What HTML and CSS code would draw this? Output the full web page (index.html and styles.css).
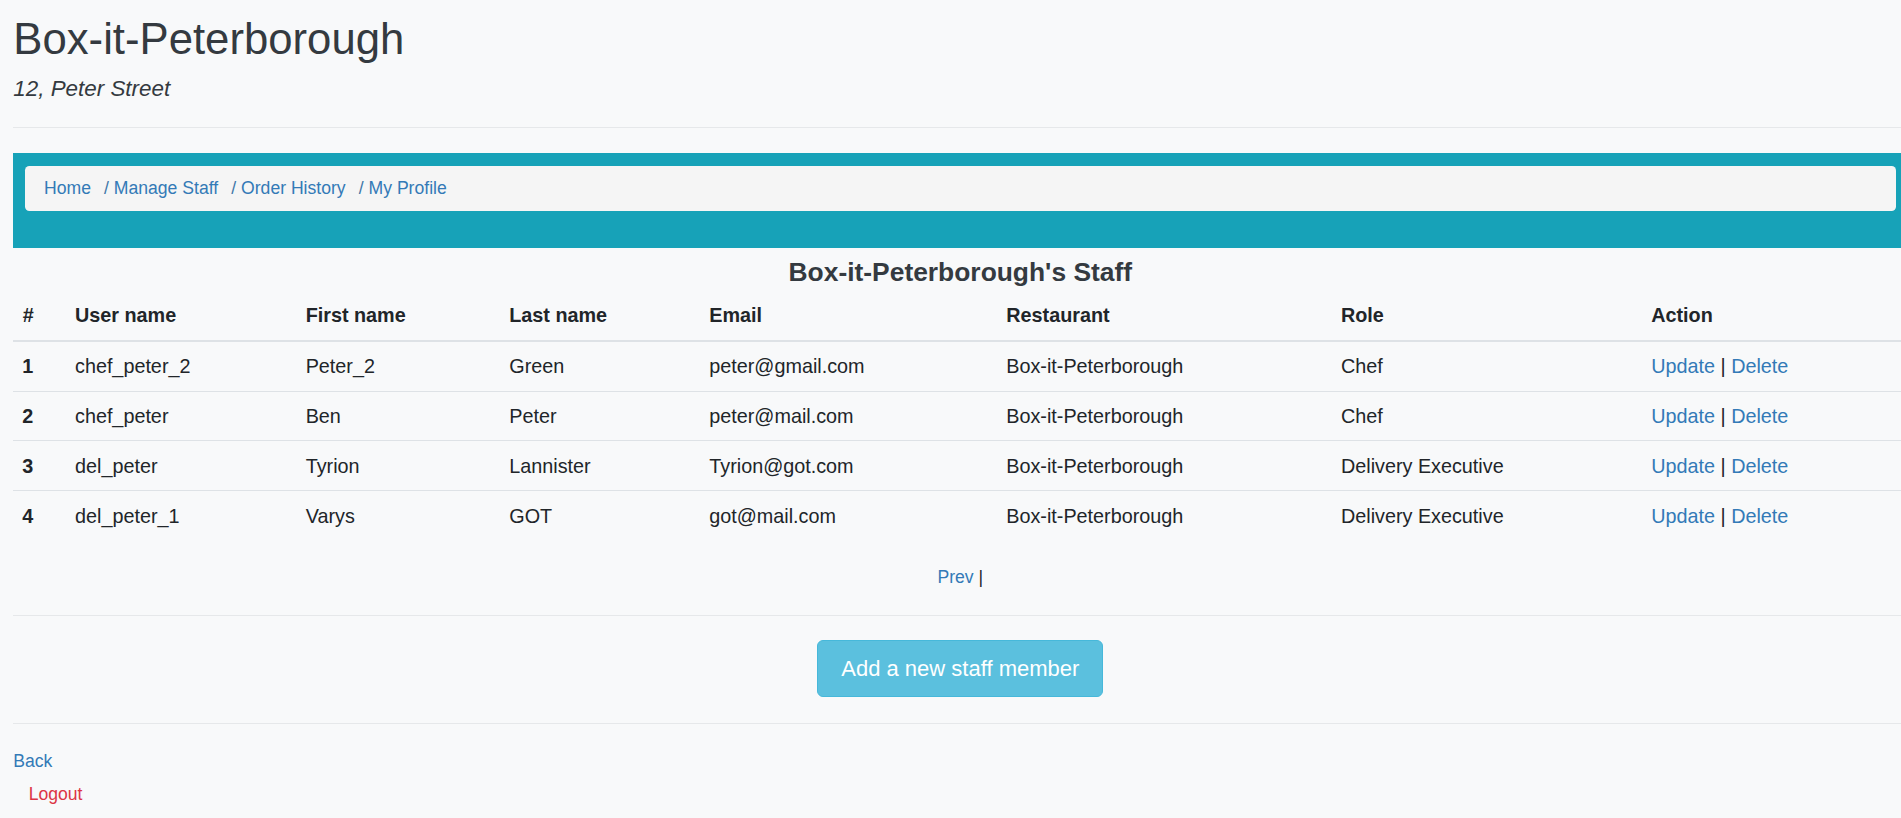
FILE: index.html
```html
<!DOCTYPE html>
<html lang="en">
<head>
<meta charset="utf-8">
<title>Box-it-Peterborough's Staff</title>
<link rel="stylesheet" href="styles.css">
</head>
<body>
<div class="page">
  <header class="site-head">
    <h1 class="site-title">Box-it-Peterborough</h1>
    <p class="site-address">12, Peter Street</p>
  </header>
  <hr class="rule rule-top">
  <nav class="nav-band">
    <ol class="crumbs">
      <li><a href="#">Home</a></li>
      <li><a href="#">Manage Staff</a></li>
      <li><a href="#">Order History</a></li>
      <li><a href="#">My Profile</a></li>
    </ol>
  </nav>
  <h2 class="staff-title">Box-it-Peterborough's Staff</h2>
  <table class="staff-table">
    <colgroup>
      <col class="c-num"><col class="c-user"><col class="c-first"><col class="c-last">
      <col class="c-email"><col class="c-rest"><col class="c-role"><col class="c-action">
    </colgroup>
    <thead>
      <tr>
        <th>#</th><th>User name</th><th>First name</th><th>Last name</th>
        <th>Email</th><th>Restaurant</th><th>Role</th><th>Action</th>
      </tr>
    </thead>
    <tbody>
      <tr>
        <td class="num">1</td><td>chef_peter_2</td><td>Peter_2</td><td>Green</td>
        <td>peter@gmail.com</td><td>Box-it-Peterborough</td><td>Chef</td>
        <td><a href="#">Update</a> | <a href="#">Delete</a></td>
      </tr>
      <tr>
        <td class="num">2</td><td>chef_peter</td><td>Ben</td><td>Peter</td>
        <td>peter@mail.com</td><td>Box-it-Peterborough</td><td>Chef</td>
        <td><a href="#">Update</a> | <a href="#">Delete</a></td>
      </tr>
      <tr>
        <td class="num">3</td><td>del_peter</td><td>Tyrion</td><td>Lannister</td>
        <td>Tyrion@got.com</td><td>Box-it-Peterborough</td><td>Delivery Executive</td>
        <td><a href="#">Update</a> | <a href="#">Delete</a></td>
      </tr>
      <tr>
        <td class="num">4</td><td>del_peter_1</td><td>Varys</td><td>GOT</td>
        <td>got@mail.com</td><td>Box-it-Peterborough</td><td>Delivery Executive</td>
        <td><a href="#">Update</a> | <a href="#">Delete</a></td>
      </tr>
    </tbody>
  </table>
  <div class="pager"><a href="#">Prev</a> |</div>
  <hr class="rule rule-mid">
  <div class="add-wrap"><a class="btn-add" href="#">Add a new staff member</a></div>
  <hr class="rule rule-bottom">
  <div class="foot-links">
    <a class="back" href="#">Back</a>
    <a class="logout" href="#">Logout</a>
  </div>
</div>
</body>
</html>
```
FILE: styles.css
```css
html, body {
  margin: 0;
  padding: 0;
}
body {
  background: #f8f9fa;
  color: #212529;
  font-family: "Liberation Sans", Arial, sans-serif;
  font-size: 17.6px;
  line-height: 26.4px;
  overflow-x: hidden;
}
a {
  color: #337ab7;
  text-decoration: none;
}
.page {
  width: 1894px;
  padding: 13.3px 0 0 13.3px;
}
.site-title {
  margin: 0;
  font-size: 43.7px;
  font-weight: 400;
  line-height: 52.8px;
  color: #343a40;
}
.site-address {
  margin: 9.8px 0 0;
  font-size: 22.4px;
  font-style: italic;
  line-height: 26.4px;
  color: #343a40;
}
.rule {
  margin: 0;
  border: 0;
  height: 0;
  border-top: 1px solid #e6e8ea;
}
.rule-top { margin-top: 24.7px; }
.rule-mid { margin-top: 24.3px; }
.rule-bottom { margin-top: 26px; }
.nav-band {
  margin-top: 24.7px;
  background: #17a2b8;
  padding: 13.3px 11.7px 37px 11.7px;
}
.crumbs {
  list-style: none;
  margin: 0;
  padding: 9.15px 19px;
  background: #f5f5f5;
  border-radius: 4.4px;
  display: flex;
  line-height: 26.4px;
}
.crumbs li + li::before {
  content: "/";
  padding: 0 5px 0 13px;
  color: #3f77a8;
}
.staff-title {
  margin: 9.6px 0 2.5px;
  text-align: center;
  font-size: 26.4px;
  line-height: 31.7px;
  font-weight: 700;
  color: #343a40;
}
.staff-table {
  width: 1894px;
  border-collapse: collapse;
  table-layout: fixed;
  font-size: 19.8px;
  line-height: 29.7px;
}
.c-num { width: 52.2px; }
.c-user { width: 230.7px; }
.c-first { width: 203.6px; }
.c-last { width: 200px; }
.c-email { width: 297px; }
.c-rest { width: 334.7px; }
.c-role { width: 310.3px; }
.c-action { width: 265.5px; }
.staff-table th,
.staff-table td {
  padding: 9.5px 9.5px;
  text-align: left;
}
.staff-table thead th {
  font-weight: 700;
  vertical-align: bottom;
  padding-bottom: 9.3px;
  border-bottom: 2px solid #dee2e6;
}
.staff-table tbody td {
  padding-top: 10.5px;
  padding-bottom: 8.5px;
  border-top: 1px solid #dee2e6;
}
.staff-table td.num {
  font-weight: 700;
  padding-left: 9px;
}
.pager {
  margin-top: 24.2px;
  text-align: center;
  line-height: 26.4px;
}
.add-wrap {
  margin-top: 24.3px;
  display: flex;
  justify-content: center;
}
.btn-add {
  display: block;
  background: #5bc0de;
  border: 1px solid #46b8da;
  color: #fff;
  font-size: 22px;
  line-height: 33px;
  padding: 10.8px 23px;
  border-radius: 6px;
}
.foot-links {
  margin-top: 24.7px;
  display: flex;
  flex-direction: column;
  align-items: flex-start;
}
.logout {
  margin-top: 5.9px;
  padding-left: 15.4px;
  color: #dc3545;
}
```
